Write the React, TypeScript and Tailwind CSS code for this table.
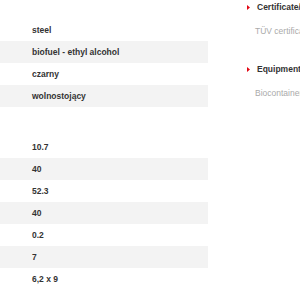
import React from 'react';

const group1 = ['steel', 'biofuel - ethyl alcohol', 'czarny', 'wolnostojący'];
const group2 = ['10.7', '40', '52.3', '40', '0.2', '7', '6,2 x 9'];

function Rows({ items }: { items: string[] }) {
  return (
    <div className="flex flex-col">
      {items.map((v, i) => (
        <div
          key={i}
          className={`h-[22px] flex items-center pl-[32px] text-[8.5px] font-bold text-[#333] ${i % 2 === 1 ? 'bg-[#f3f3f3]' : ''}`}
        >
          {v}
        </div>
      ))}
    </div>
  );
}

function Section({ title, text }: { title: string; text: string }) {
  return (
    <div className="flex flex-col">
      <div className="flex items-center h-[12px] mt-[1px] text-[8.5px] font-bold text-[#333] whitespace-nowrap">
        <span className="w-[10px] shrink-0 flex items-center">
          <svg width="3" height="5" viewBox="0 0 3 5">
            <path d="M0 0 L3 2.5 L0 5 Z" fill="#e30613" />
          </svg>
        </span>
        {title}
      </div>
      <div className="mt-[12px] pl-[8px] text-[8.5px] text-[#aaa] whitespace-nowrap leading-[12px]">{text}</div>
    </div>
  );
}

export default function App() {
  return (
    <div className="w-[300px] h-[300px] overflow-hidden bg-white flex" style={{ fontFamily: '"Liberation Sans", Arial, sans-serif' }}>
      <div className="w-[208px] shrink-0 pt-[19px] flex flex-col gap-[29px]">
        <Rows items={group1} />
        <Rows items={group2} />
      </div>
      <div className="ml-[39px] flex flex-col gap-[25px] overflow-hidden">
        <Section title="Certificate/Approval" text="TÜV certificate" />
        <Section title="Equipment" text="Biocontainer" />
      </div>
    </div>
  );
}
